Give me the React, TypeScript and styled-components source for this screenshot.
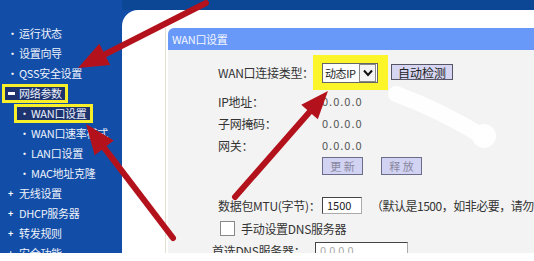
import styled, { createGlobalStyle } from 'styled-components';

const GlobalStyle = createGlobalStyle`
    html, body {
        margin: 0;
        padding: 0;
        background: #ffffff;
    }
    body {
        font-family: "Noto Sans CJK SC", "Liberation Sans", sans-serif;
    }
`;

interface MenuEntry {
    label: string
    mark: '•' | '+' | '-'
    sub?: boolean
    active?: boolean
}

const menu: MenuEntry[] = [
    { label: '运行状态', mark: '•' },
    { label: '设置向导', mark: '•' },
    { label: 'QSS安全设置', mark: '•' },
    { label: '网络参数', mark: '-', active: true },
    { label: 'WAN口设置', mark: '•', sub: true, active: true },
    { label: 'WAN口速率模式', mark: '•', sub: true },
    { label: 'LAN口设置', mark: '•', sub: true },
    { label: 'MAC地址克隆', mark: '•', sub: true },
    { label: '无线设置', mark: '+' },
    { label: 'DHCP服务器', mark: '+' },
    { label: '转发规则', mark: '+' },
    { label: '安全功能', mark: '+' },
];

const infoRows = [
    { label: 'IP地址：', value: '0.0.0.0' },
    { label: '子网掩码：', value: '0.0.0.0' },
    { label: '网关：', value: '0.0.0.0' },
];

const Arrow: React.FC<{ tail: [number, number], tip: [number, number], head?: number, half?: number }> = ({ tail, tip, head = 30, half = 12 }) => {
    const dx = tip[0] - tail[0];
    const dy = tip[1] - tail[1];
    const len = Math.hypot(dx, dy);
    const ux = dx / len;
    const uy = dy / len;
    const bx = tip[0] - ux * head;
    const by = tip[1] - uy * head;
    const px = -uy;
    const py = ux;
    const pts = `${tip[0]},${tip[1]} ${bx + px * half},${by + py * half} ${bx - px * half},${by - py * half}`;
    return (
        <g>
            <line x1={tail[0]} y1={tail[1]} x2={bx + ux * 4} y2={by + uy * 4} stroke="#b3121c" strokeWidth={6} strokeLinecap="round" />
            <polygon points={pts} fill="#b3121c" />
        </g>
    );
};

const App: React.FC = () => {
    return (
        <>
            <GlobalStyle />
            <Screen>
                <Sidebar>
                    {menu.map(item => (
                        <MenuItem key={item.label} sub={item.sub}>
                            <MenuLabel active={item.active}>
                                {item.mark === '-' ? <Dash /> : <Mark>{item.mark}</Mark>}
                                {item.label}
                            </MenuLabel>
                        </MenuItem>
                    ))}
                </Sidebar>

                <RightColumn>
                    <TopBand />
                    <Canvas>
                        <Panel>
                            <PanelHeader>WAN口设置</PanelHeader>
                            <PanelBody>
                                <Row height={20} top={12}>
                                    <Label>WAN口连接类型：</Label>
                                    <Highlight>
                                        <Select>
                                            <span>动态IP</span>
                                            <SelectArrow>
                                                <svg width="10" height="8" viewBox="0 0 10 8">
                                                    <path d="M1 1.5 L5 6 L9 1.5" stroke="#111" strokeWidth="2" fill="none" />
                                                </svg>
                                            </SelectArrow>
                                        </Select>
                                    </Highlight>
                                    <Button>自动检测</Button>
                                </Row>

                                {infoRows.map((row, i) => (
                                    <Row key={row.label} height={22} top={i === 0 ? 8 : 0}>
                                        <Label>{row.label}</Label>
                                        <Value>{row.value}</Value>
                                    </Row>
                                ))}

                                <Row height={20}>
                                    <Label />
                                    <GhostButton>更 新</GhostButton>
                                    <GhostButton>释 放</GhostButton>
                                </Row>

                                <Row height={20} top={19}>
                                    <Label>数据包MTU(字节)：</Label>
                                    <Input width={40}>1500</Input>
                                    <Note>（默认是1500，如非必要，请勿修改。）</Note>
                                </Row>

                                <Row height={20} top={3}>
                                    <CheckRow>
                                        <CheckBox />
                                        手动设置DNS服务器
                                    </CheckRow>
                                </Row>

                                <Row height={20} top={2} shift={-6}>
                                    <Label wide>首选DNS服务器：</Label>
                                    <Input width={93} muted>0.0.0.0</Input>
                                </Row>
                            </PanelBody>
                        </Panel>
                    </Canvas>
                </RightColumn>

                <Overlay width="534" height="253" viewBox="0 0 534 253">
                    <path d="M396 94 Q440 110 482 136" stroke="#ffffff" strokeWidth={16} strokeLinecap="round" fill="none" opacity={0.92} />
                    <circle cx="484" cy="136" r="12" fill="#ffffff" opacity={0.92} />
                    <Arrow tail={[206, 3]} tip={[78, 68]} />
                    <Arrow tail={[173, 238]} tip={[86, 124]} />
                    <Arrow tail={[235, 197]} tip={[328, 91]} head={28} half={11} />
                </Overlay>
            </Screen>
        </>
    );
};

const Screen = styled.div`
    position: relative;
    width: 534px;
    height: 253px;
    overflow: hidden;
    display: flex;
    background: #124ea8;
`;

const Sidebar = styled.nav`
    width: 122px;
    flex-shrink: 0;
    padding-top: 23px;
    display: flex;
    flex-direction: column;
    background: #124ea8;
`;

const MenuItem = styled.div<{ sub?: boolean }>`
    height: 20px;
    flex-shrink: 0;
    display: flex;
    align-items: center;
    padding-left: ${p => (p.sub ? '14px' : '2px')};
`;

const MenuLabel = styled.div<{ active?: boolean }>`
    display: flex;
    align-items: center;
    box-sizing: border-box;
    height: ${p => (p.active ? '19px' : '20px')};
    padding: 0 3px 0 3px;
    border: 3px solid ${p => (p.active ? '#f6ef2a' : 'transparent')};
    background: ${p => (p.active ? '#1d3470' : 'transparent')};
    color: #eef2fb;
    font-size: 11px;
    letter-spacing: -0.3px;
    white-space: nowrap;
`;

const Mark = styled.span`
    display: inline-block;
    flex-shrink: 0;
    width: 11px;
    font-size: 9px;
    font-weight: 700;
    color: #ffffff;
`;

const Dash = styled.span`
    flex-shrink: 0;
    width: 7px;
    height: 3px;
    margin-right: 4px;
    background: #ffffff;
`;

const RightColumn = styled.div`
    flex: 1;
    display: flex;
    flex-direction: column;
    min-height: 0;
`;

const TopBand = styled.div`
    height: 10px;
    flex-shrink: 0;
    background: #0c4796;
`;

const Canvas = styled.div`
    flex: 1;
    min-height: 0;
    background: #ffffff;
    border-top-left-radius: 16px;
    padding: 18px 0 0 43px;
    display: flex;
`;

const Panel = styled.section`
    flex: 1;
    display: flex;
    flex-direction: column;
    border-left: 1px solid #e2ded0;
    padding-left: 2px;
`;

const PanelHeader = styled.div`
    height: 22px;
    flex-shrink: 0;
    display: flex;
    align-items: center;
    padding-left: 4px;
    background: #6898f8;
    border-top-left-radius: 6px;
    color: #f4f6ff;
    font-size: 11px;
    letter-spacing: -0.3px;
`;

const PanelBody = styled.div`
    flex: 1;
    background: #f3f3f3;
    padding-left: 50px;
    display: flex;
    flex-direction: column;
`;

const Row = styled.div<{ height: number, top?: number, shift?: number }>`
    display: flex;
    align-items: center;
    height: ${p => p.height}px;
    margin-top: ${p => p.top ?? 0}px;
    margin-left: ${p => p.shift ?? 0}px;
    flex-shrink: 0;
    white-space: nowrap;
`;

const Label = styled.div<{ wide?: boolean }>`
    width: ${p => (p.wide ? '103px' : '104px')};
    flex-shrink: 0;
    color: #333333;
    font-size: 12px;
    letter-spacing: -0.3px;
`;

const Value = styled.div`
    color: #555555;
    font-size: 11px;
    letter-spacing: 1px;
`;

const Highlight = styled.div`
    margin-left: -9px;
    padding: 8px 10px 7px 9px;
    background: #fbf52a;
    display: flex;
`;

const Select = styled.div`
    width: 52px;
    height: 18px;
    display: flex;
    align-items: center;
    justify-content: space-between;
    border: 1px solid #666666;
    background: #ffffff;
    color: #222222;
    font-size: 11px;
    padding-left: 2px;
    box-sizing: content-box;
    letter-spacing: -0.4px;
`;

const SelectArrow = styled.div`
    width: 15px;
    height: 16px;
    margin-right: 1px;
    display: flex;
    align-items: center;
    justify-content: center;
    border: 1px solid #888888;
    background: #f4f4f4;
`;

const Button = styled.div`
    margin-left: 3px;
    height: 14px;
    padding: 0 6px;
    display: flex;
    align-items: center;
    border: 1px solid #555566;
    background: #d6d6f2;
    color: #222222;
    font-size: 12px;
`;

const GhostButton = styled.div`
    width: 39px;
    height: 16px;
    margin-right: 18px;
    display: flex;
    align-items: center;
    justify-content: center;
    border: 1px solid #6b6b8a;
    background: #d2d2f2;
    color: #8888a0;
    font-size: 11px;
`;

const Input = styled.div<{ width: number, muted?: boolean }>`
    width: ${p => p.width}px;
    height: 17px;
    box-sizing: border-box;
    padding-left: 4px;
    display: flex;
    align-items: center;
    border: 1px solid #aaaaaa;
    border-top-color: #444444;
    border-left-color: #444444;
    background: #ffffff;
    color: ${p => (p.muted ? '#aaaaaa' : '#222222')};
    font-size: 11px;
`;

const Note = styled.div`
    margin-left: 9px;
    color: #333333;
    font-size: 12px;
    letter-spacing: -0.5px;
`;

const CheckRow = styled.label`
    display: flex;
    align-items: center;
    gap: 6px;
    color: #333333;
    font-size: 12px;
    letter-spacing: -0.3px;
`;

const CheckBox = styled.span`
    width: 13px;
    height: 13px;
    margin-left: 2px;
    border: 1px solid #888888;
    background: #ffffff;
`;

const Overlay = styled.svg`
    position: absolute;
    left: 0;
    top: 0;
    pointer-events: none;
`;

export default App
